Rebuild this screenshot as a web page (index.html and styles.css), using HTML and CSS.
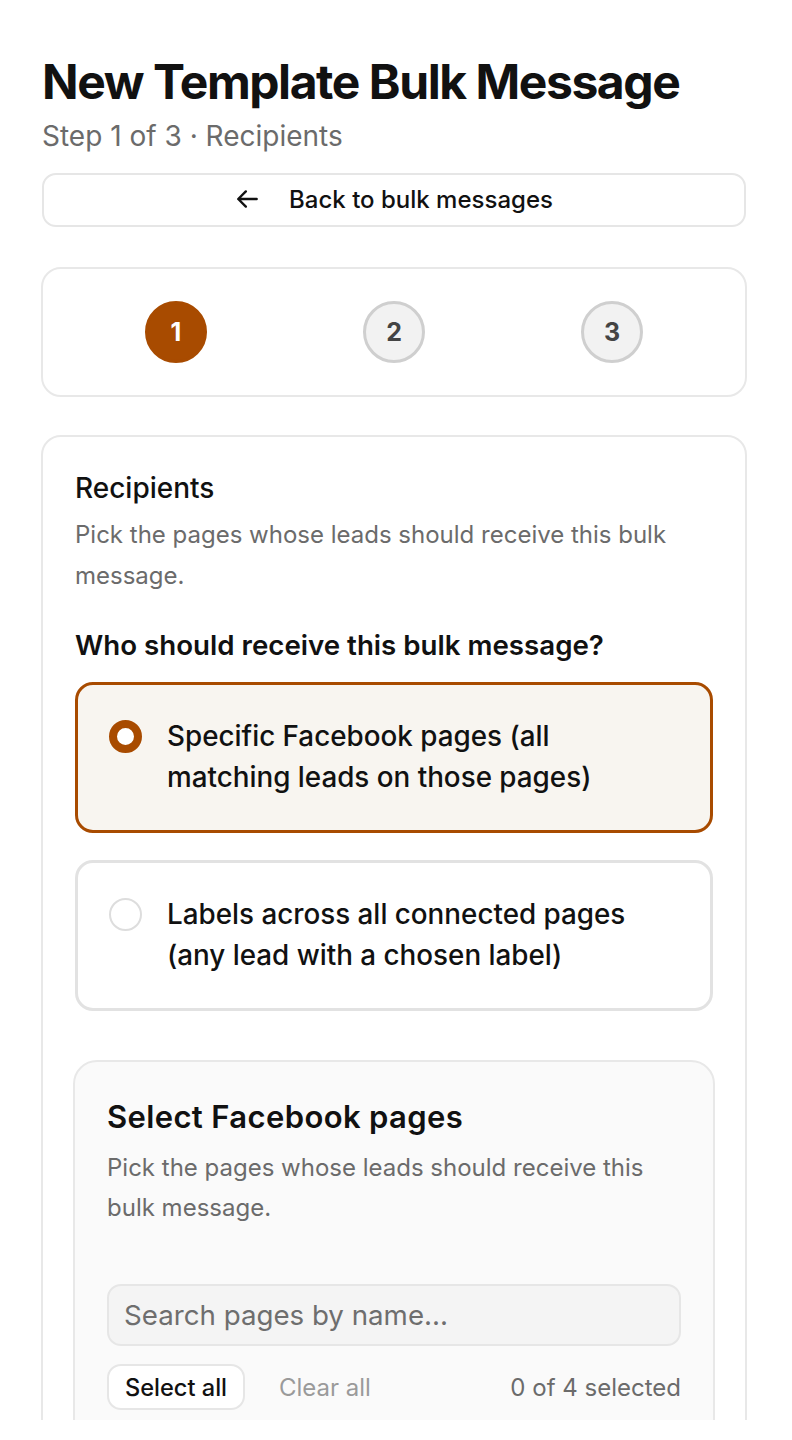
FILE: index.html
```html
<!DOCTYPE html>
<html lang="en">
<head>
<meta charset="utf-8">
<title>New Template Bulk Message</title>
<link rel="stylesheet" href="styles.css">
</head>
<body>
<div class="viewport">
  <main class="page">
    <header class="page-header">
      <h1 class="page-title">New Template Bulk Message</h1>
      <p class="page-subtitle">Step 1 of 3 · Recipients</p>
    </header>

    <button class="back-btn" type="button">
      <svg class="back-icon" viewBox="0 0 24 24" width="26" height="26" aria-hidden="true">
        <path d="M20 12H4M10 5l-7 7 7 7" fill="none" stroke="currentColor" stroke-width="2.2" stroke-linecap="round" stroke-linejoin="round"/>
      </svg>
      <span>Back to bulk messages</span>
    </button>

    <section class="stepper">
      <div class="step"><span class="step-dot is-active">1</span></div>
      <div class="step"><span class="step-dot">2</span></div>
      <div class="step"><span class="step-dot">3</span></div>
    </section>

    <section class="card">
      <h2 class="card-title">Recipients</h2>
      <p class="card-desc">Pick the pages whose leads should receive this bulk message.</p>

      <h3 class="question">Who should receive this bulk message?</h3>

      <div class="options">
        <label class="option is-selected">
          <span class="radio is-checked"></span>
          <span class="option-text">Specific Facebook pages (all matching leads on those pages)</span>
        </label>
        <label class="option">
          <span class="radio"></span>
          <span class="option-text">Labels across all connected pages (any lead with a chosen label)</span>
        </label>
      </div>

      <div class="subcard">
        <h3 class="subcard-title">Select Facebook pages</h3>
        <p class="subcard-desc">Pick the pages whose leads should receive this bulk message.</p>
        <div class="search">Search pages by name...</div>
        <div class="actions">
          <button class="chip-btn" type="button">Select all</button>
          <button class="link-btn" type="button">Clear all</button>
          <span class="count">0 of 4 selected</span>
        </div>
        <div class="list-spacer"></div>
      </div>
    </section>
  </main>
</div>
</body>
</html>
```

FILE: styles.css
```css
* { box-sizing: border-box; }
html, body { margin: 0; padding: 0; background: #ffffff; }
body {
  font-family: Inter, "Noto Sans", "Liberation Sans", sans-serif;
  color: #111111;
  -webkit-font-smoothing: antialiased;
}
.viewport {
  height: 1420px;
  overflow: hidden;
}
.page {
  padding: 54px 42px 0 41px;
  display: flex;
  flex-direction: column;
}
.page-header { padding-left: 1px; }
.page-title {
  margin: 0;
  font-size: 48px;
  line-height: 56px;
  font-weight: 700;
  letter-spacing: -0.03em;
  color: #111;
}
.page-subtitle {
  margin: 8px 0 0;
  font-size: 28px;
  line-height: 36px;
  color: #6b6b6b;
}
.back-btn {
  margin: 19px 0 0 1px;
  height: 54px;
  width: 704px;
  border: 2px solid #e6e6e6;
  border-radius: 14px;
  background: #fff;
  display: flex;
  align-items: center;
  justify-content: center;
  gap: 28px;
  font-family: inherit;
  font-size: 24px;
  font-weight: 500;
  color: #111;
  padding: 0 0 2px 0;
}
.back-icon { color: #111; }
.stepper {
  margin-top: 40px;
  width: 706px;
  height: 130px;
  border: 2px solid #e8e8e8;
  border-radius: 20px;
  padding: 0 24px;
  display: grid;
  grid-template-columns: repeat(3, 1fr);
  align-items: center;
  justify-items: center;
}
.step-dot {
  width: 62px;
  height: 62px;
  border-radius: 50%;
  border: 3px solid #cfcfcf;
  background: #f2f2f2;
  color: #444;
  font-size: 25px;
  font-weight: 700;
  display: flex;
  align-items: center;
  justify-content: center;
}
.step-dot.is-active {
  background: #a84b00;
  border-color: #a84b00;
  color: #fff;
}
.card {
  margin-top: 38px;
  width: 706px;
  border: 2px solid #e8e8e8;
  border-radius: 20px;
  padding: 33px 32px 40px;
}
.card-title {
  margin: 0;
  font-size: 28px;
  line-height: 36px;
  font-weight: 500;
}
.card-desc {
  margin: 8px 0 0;
  font-size: 24px;
  line-height: 41px;
  color: #6b6b6b;
  max-width: 610px;
}
.question {
  margin: 31px 0 0;
  font-size: 27.7px;
  line-height: 36px;
  font-weight: 600;
}
.options {
  margin-top: 19px;
  display: flex;
  flex-direction: column;
  gap: 27px;
}
.option {
  display: flex;
  align-items: flex-start;
  gap: 25px;
  border: 3px solid #e2e2e2;
  border-radius: 18px;
  background: #fff;
  padding: 31px 40px 31px 31px;
  min-height: 151px;
}
.option.is-selected {
  border-color: #a84b00;
  background: #f8f5f0;
}
.radio {
  flex: none;
  width: 33px;
  height: 33px;
  margin-top: 4px;
  border-radius: 50%;
  border: 2px solid #dddddd;
  background: #fff;
}
.radio.is-checked {
  border: 8px solid #a84b00;
}
.option-text {
  font-size: 27.8px;
  line-height: 41px;
  font-weight: 500;
  color: #111;
  max-width: 475px;
}
.subcard {
  margin: 49px -2px 0;
  border: 2px solid #e8e8e8;
  border-radius: 24px;
  background: #fafafa;
  padding: 35px 32px 40px;
}
.subcard-title {
  margin: 0;
  font-size: 31px;
  line-height: 40px;
  font-weight: 600;
  letter-spacing: 0.012em;
}
.subcard-desc {
  margin: 11px 0 0;
  font-size: 24px;
  line-height: 40px;
  color: #6b6b6b;
  max-width: 560px;
}
.search {
  margin-top: 56px;
  height: 62px;
  border: 2px solid #e6e6e6;
  border-radius: 14px;
  background: #f4f4f4;
  padding: 0 15px;
  display: flex;
  align-items: center;
  font-size: 27.7px;
  color: #6e6e6e;
}
.actions {
  margin-top: 18px;
  display: flex;
  align-items: center;
}
.chip-btn {
  height: 46px;
  width: 138px;
  border: 2px solid #e6e6e6;
  border-radius: 14px;
  background: #fff;
  font-family: inherit;
  font-size: 23.6px;
  font-weight: 500;
  color: #111;
  padding: 0;
}
.link-btn {
  margin-left: 34px;
  border: 0;
  background: none;
  padding: 0;
  font-family: inherit;
  font-size: 24px;
  color: #9a9a9a;
}
.count {
  margin-left: auto;
  font-size: 24px;
  color: #6b6b6b;
}
.list-spacer { height: 200px; }
```
